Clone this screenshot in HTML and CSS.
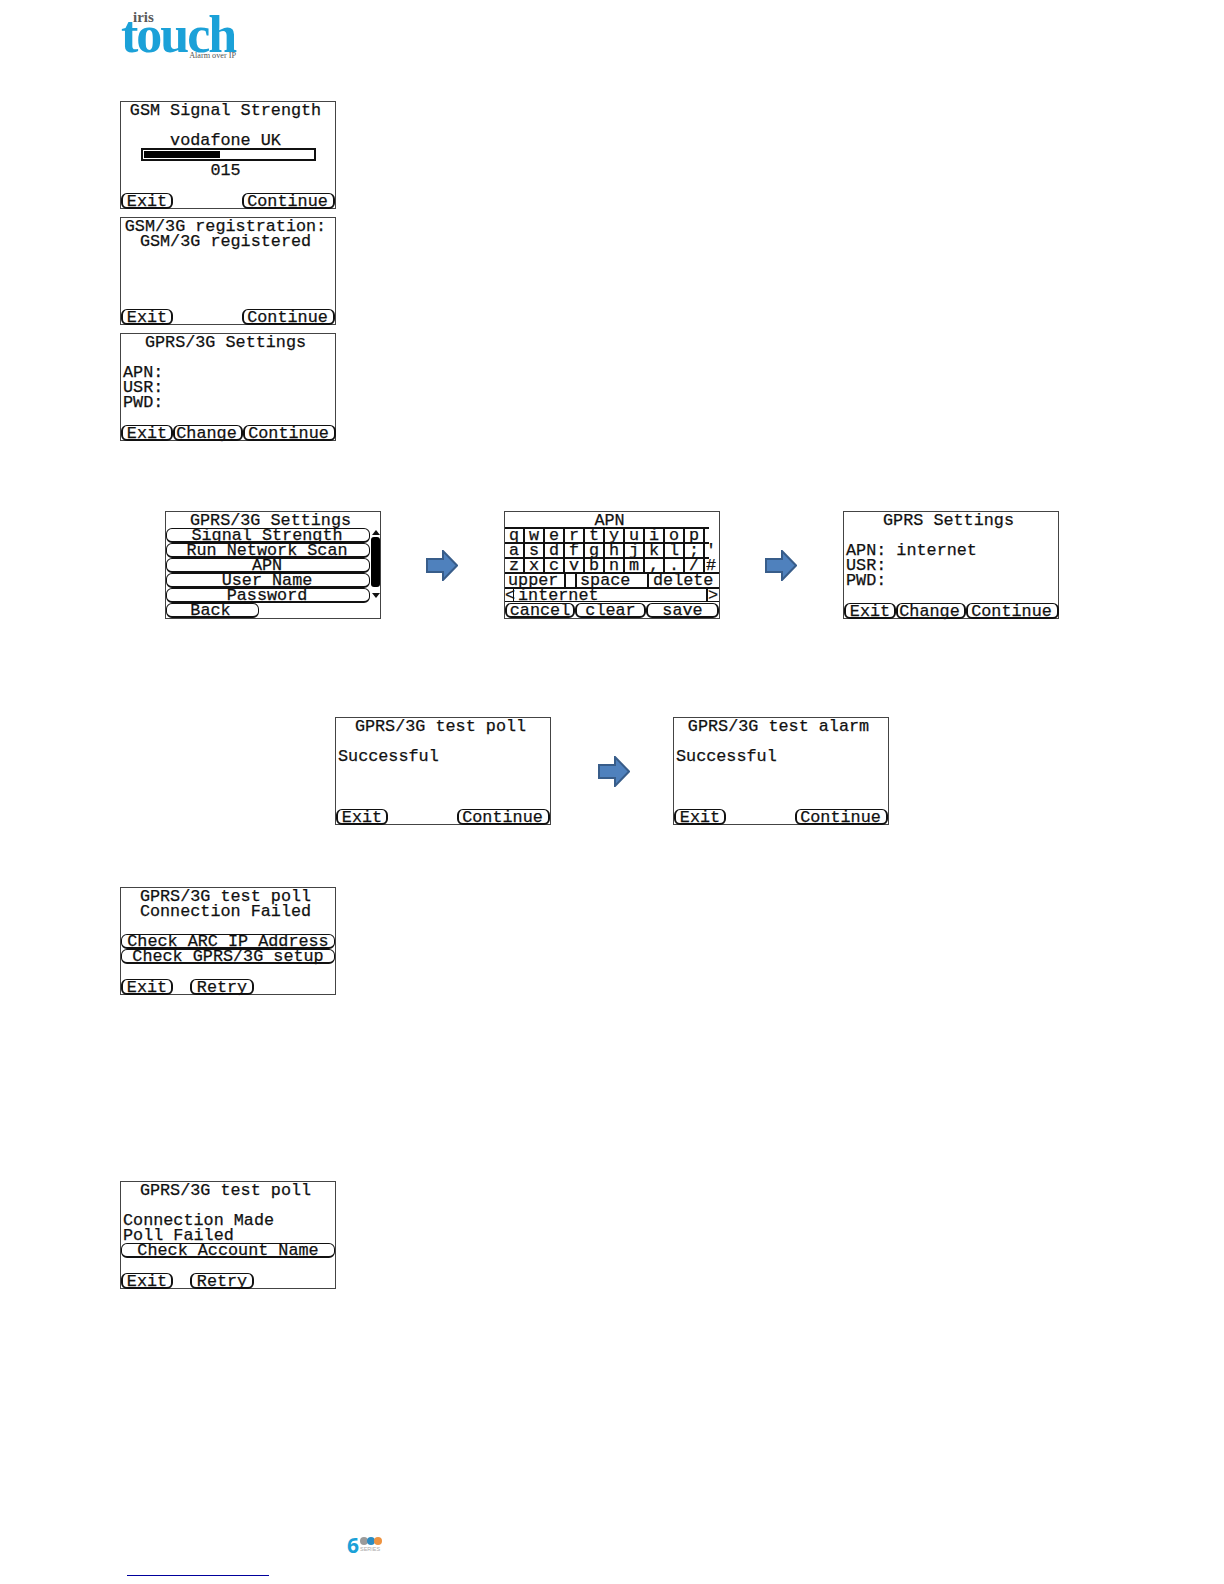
FILE: index.html
```html
<!DOCTYPE html>
<html lang="en">
<head>
    <meta charset="UTF-8">
    <title>GPRS/3G Settings</title>
    <link rel="stylesheet" href="styles.css">
</head>
<body>
    <div class="logo">
        <div class="logo-iris">iris</div>
        <div class="logo-touch">touch</div>
        <div class="logo-tag">Alarm over IP</div>
    </div>

    <div class="stack">
        <div class="screen">
            <div class="row center">GSM Signal Strength</div>
            <div class="row"></div>
            <div class="row center">vodafone UK</div>
            <div class="row bar-row"><div class="bar"><div class="bar-fill"></div></div></div>
            <div class="row center">015</div>
            <div class="row"></div>
            <div class="softkeys split"><div class="btn exit">Exit</div><div class="btn cont">Continue</div></div>
        </div>
        <div class="screen">
            <div class="row center">GSM/3G registration:</div>
            <div class="row center">GSM/3G registered</div>
            <div class="row"></div>
            <div class="row"></div>
            <div class="row"></div>
            <div class="row"></div>
            <div class="softkeys split"><div class="btn exit">Exit</div><div class="btn cont">Continue</div></div>
        </div>
        <div class="screen">
            <div class="row center">GPRS/3G Settings</div>
            <div class="row"></div>
            <div class="row">APN:</div>
            <div class="row">USR:</div>
            <div class="row">PWD:</div>
            <div class="row"></div>
            <div class="softkeys"><div class="btn exit">Exit</div><div class="btn change">Change</div><div class="btn cont">Continue</div></div>
        </div>
    </div>

    <div class="flow flow-settings">
        <div class="screen">
            <div class="row center">GPRS/3G Settings</div>
            <div class="menu">
                <div class="menu-list">
                    <div class="btn item">Signal Strength</div>
                    <div class="btn item">Run Network Scan</div>
                    <div class="btn item">APN</div>
                    <div class="btn item">User Name</div>
                    <div class="btn item">Password</div>
                </div>
                <div class="scroll">
                    <div class="scroll-up"></div>
                    <div class="scroll-thumb"></div>
                    <div class="scroll-down"></div>
                </div>
            </div>
            <div class="btn back">Back</div>
        </div>

        <svg class="arrow" viewBox="0 0 32 31"><polygon points="1,9 17,9 17,1 31,15.5 17,30 17,22 1,22"/></svg>

        <div class="screen">
            <div class="row center kb-title">APN</div>
            <div class="keys">
                <div class="key">q</div><div class="key">w</div><div class="key">e</div><div class="key">r</div><div class="key">t</div><div class="key">y</div><div class="key">u</div><div class="key">i</div><div class="key">o</div><div class="key">p</div>
            </div>
            <div class="keys">
                <div class="key">a</div><div class="key">s</div><div class="key">d</div><div class="key">f</div><div class="key">g</div><div class="key">h</div><div class="key">j</div><div class="key">k</div><div class="key">l</div><div class="key">;</div><div class="key key-last">'</div>
            </div>
            <div class="keys">
                <div class="key">z</div><div class="key">x</div><div class="key">c</div><div class="key">v</div><div class="key">b</div><div class="key">n</div><div class="key">m</div><div class="key">,</div><div class="key">.</div><div class="key">/</div><div class="key key-last">#</div>
            </div>
            <div class="keys keys-wide">
                <div class="key key-upper">upper</div><div class="key key-space">space</div><div class="key key-delete">delete</div>
            </div>
            <div class="entry"><span class="entry-arrow">&lt;</span><span class="entry-text">internet</span><span class="entry-arrow">&gt;</span></div>
            <div class="softkeys kb-keys"><div class="btn kb-cancel">cancel</div><div class="btn kb-clear">clear</div><div class="btn kb-save">save</div></div>
        </div>

        <svg class="arrow" viewBox="0 0 32 31"><polygon points="1,9 17,9 17,1 31,15.5 17,30 17,22 1,22"/></svg>

        <div class="screen">
            <div class="row center">GPRS Settings</div>
            <div class="row"></div>
            <div class="row">APN: internet</div>
            <div class="row">USR:</div>
            <div class="row">PWD:</div>
            <div class="row"></div>
            <div class="softkeys"><div class="btn exit">Exit</div><div class="btn change">Change</div><div class="btn cont">Continue</div></div>
        </div>
    </div>

    <div class="flow flow-test">
        <div class="screen">
            <div class="row center">GPRS/3G test poll</div>
            <div class="row"></div>
            <div class="row">Successful</div>
            <div class="row"></div>
            <div class="row"></div>
            <div class="row"></div>
            <div class="softkeys split"><div class="btn exit">Exit</div><div class="btn cont">Continue</div></div>
        </div>

        <svg class="arrow arrow-test" viewBox="0 0 32 31"><polygon points="1,9 17,9 17,1 31,15.5 17,30 17,22 1,22"/></svg>

        <div class="screen">
            <div class="row center">GPRS/3G test alarm</div>
            <div class="row"></div>
            <div class="row">Successful</div>
            <div class="row"></div>
            <div class="row"></div>
            <div class="row"></div>
            <div class="softkeys split"><div class="btn exit">Exit</div><div class="btn cont">Continue</div></div>
        </div>
    </div>

    <div class="single single-failed">
        <div class="screen">
            <div class="row center">GPRS/3G test poll</div>
            <div class="row center">Connection Failed</div>
            <div class="row"></div>
            <div class="btn wide">Check ARC IP Address</div>
            <div class="btn wide">Check GPRS/3G setup</div>
            <div class="row"></div>
            <div class="softkeys"><div class="btn exit">Exit</div><div class="btn retry">Retry</div></div>
        </div>
    </div>

    <div class="single single-poll">
        <div class="screen">
            <div class="row center">GPRS/3G test poll</div>
            <div class="row"></div>
            <div class="row">Connection Made</div>
            <div class="row">Poll Failed</div>
            <div class="btn wide">Check Account Name</div>
            <div class="row"></div>
            <div class="softkeys"><div class="btn exit">Exit</div><div class="btn retry">Retry</div></div>
        </div>
    </div>

    <div class="series">
        <div class="series-six">6</div>
        <div class="series-right">
            <div class="series-dots"><span class="dot dot-grey"></span><span class="dot dot-blue"></span><span class="dot dot-orange"></span></div>
            <div class="series-name">SERIES</div>
        </div>
    </div>

    <div class="foot-link"></div>
</body>
</html>
```

FILE: styles.css
```css
body {
    margin: 0;
    background: white;
    color: #111;
    font-family: "Liberation Mono", monospace;
    font-size: 16.8px;
    height: 1584px;
    overflow: hidden;
}

/* logo */
.logo {
    margin: 12px 0 0 121px;
    width: 116px;
    height: 89px;
}
.logo-iris {
    font-family: "Liberation Serif", serif;
    font-weight: bold;
    font-size: 15px;
    line-height: 11px;
    color: #5a5a5a;
    padding-left: 12px;
}
.logo-touch {
    font-family: "Liberation Serif", serif;
    font-weight: bold;
    font-size: 52px;
    line-height: 23px;
    letter-spacing: -2px;
    color: #1ba1d8;
    white-space: nowrap;
}
.logo-tag {
    font-family: "Liberation Serif", serif;
    font-size: 8.2px;
    line-height: 8px;
    color: #555;
    text-align: right;
    margin-top: 6px;
    padding-right: 1px;
}

/* lcd screens */
.stack {
    margin-left: 120px;
    display: flex;
    flex-direction: column;
    gap: 8px;
}
.screen {
    box-sizing: border-box;
    width: 216px;
    height: 108px;
    border: 1px solid #444;
    padding-top: 1px;
    display: flex;
    flex-direction: column;
    flex-shrink: 0;
    white-space: nowrap;
    -webkit-text-stroke: 0.25px #111;
}
.row {
    height: 15px;
    line-height: 15px;
    padding-left: 2px;
    flex-shrink: 0;
    white-space: pre;
}
.center {
    text-align: center;
    padding: 0 5px 0 0;
}

.bar-row {
    padding: 0 0 0 20px;
    box-sizing: border-box;
}
.bar {
    box-sizing: border-box;
    width: 175px;
    height: 13px;
    border: 2px solid #111;
    padding: 1px;
}
.bar-fill {
    width: 76px;
    height: 100%;
    background: #000;
}

.btn {
    box-sizing: border-box;
    height: 15px;
    line-height: 13px;
    border: 1px solid #111;
    border-bottom-width: 2px;
    border-radius: 6px;
    text-align: center;
    flex-shrink: 0;
}

.softkeys {
    display: flex;
    margin-top: auto;
    height: 16px;
}
.softkeys .btn {
    height: 16px;
    line-height: 15px;
    border-left-width: 2px;
    border-right-width: 2px;
}
.split {
    justify-content: space-between;
}
.exit { width: 52px; }
.change { width: 70px; padding-right: 3px; }
.cont { width: 93px; padding-right: 2px; }
.retry { width: 64px; margin-left: 17px; }
.wide { width: 214px; }

/* menu */
.menu {
    display: flex;
}
.menu-list {
    width: 204px;
}
.item {
    width: 204px;
    padding-right: 2px;
}
.scroll {
    width: 11px;
    display: flex;
    flex-direction: column;
    align-items: center;
    padding: 2px 0 0 1px;
}
.scroll-up,
.scroll-down {
    width: 0;
    height: 0;
    border-left: 4px solid transparent;
    border-right: 4px solid transparent;
}
.scroll-up {
    border-bottom: 5px solid #111;
}
.scroll-down {
    border-top: 5px solid #111;
    margin-top: 6px;
}
.scroll-thumb {
    width: 9px;
    height: 50px;
    margin-top: 2px;
    background: #000;
    border-radius: 3px;
}
.back {
    width: 93px;
    height: 15px;
    padding-right: 4px;
}

/* keyboard */
.kb-title {
    height: 14px;
    line-height: 15px;
}
.keys {
    display: flex;
    height: 15px;
    border-top: 2px solid #111;
    box-sizing: border-box;
    width: 204px;
}
.key {
    width: 20px;
    box-sizing: border-box;
    border-right: 2px solid #111;
    line-height: 14px;
    text-align: center;
    flex-shrink: 0;
}
.key-last {
    border-right: none;
    width: 12px;
    margin-right: -12px;
}
.keys-wide {
    width: 100%;
}
.key-upper { width: 61px; text-align: left; padding-left: 3px; }
.key-space { width: 63px; text-align: left; padding-left: 3px; border-left: 2px solid #111; border-right: none; margin-left: 9px; }
.key-delete { width: 72px; text-align: left; padding-left: 4px; border-left: 2px solid #111; border-right: none; margin-left: 9px; }
.entry {
    display: flex;
    box-sizing: border-box;
    height: 15px;
    line-height: 13px;
    border-top: 2px solid #111;
    border-bottom: 1px solid #111;
}
.entry-arrow {
    width: 8px;
    flex-shrink: 0;
}
.entry-text {
    width: 195px;
    padding-left: 4px;
    box-sizing: border-box;
    border-left: 1px solid #111;
    border-right: 2px solid #111;
}
.kb-keys {
    height: 15px;
}
.kb-keys .btn {
    height: 15px;
    line-height: 14px;
}
.kb-cancel { width: 70px; }
.kb-clear { width: 71px; }
.kb-save { width: 73px; }

/* arrow */
.arrow {
    width: 32px;
    height: 31px;
    margin: 0 46px 0 45px;
    flex-shrink: 0;
}
.arrow polygon {
    fill: #4f81bd;
    stroke: #385d8a;
    stroke-width: 2;
}
.arrow-test {
    margin: 0 43px 0 47px;
}

/* page rows */
.flow {
    display: flex;
    align-items: center;
}
.flow-settings {
    margin: 70px 0 0 165px;
}
.flow-test {
    margin: 98px 0 0 335px;
}
.single {
    margin-left: 120px;
}
.single-failed {
    margin-top: 62px;
}
.single-poll {
    margin-top: 186px;
}

/* footer */
.series {
    display: flex;
    margin: 248px 0 0 347px;
    height: 16px;
}
.series-six {
    font-family: "Open Sans", sans-serif;
    font-weight: bold;
    font-size: 21px;
    line-height: 16px;
    color: #1ba1d8;
    width: 13px;
}
.series-dots {
    display: flex;
    height: 9px;
}
.dot {
    width: 8px;
    height: 8px;
    border-radius: 50%;
    margin-right: -1px;
}
.dot-grey { background: #9a9a9a; }
.dot-blue { background: #2a8cc4; }
.dot-orange { background: #ee9340; }
.series-name {
    font-family: "Liberation Sans", sans-serif;
    font-size: 5.5px;
    line-height: 7px;
    color: #aaa;
}
.foot-link {
    width: 142px;
    height: 1px;
    background: #00009c;
    margin: 22px 0 0 127px;
}
```
